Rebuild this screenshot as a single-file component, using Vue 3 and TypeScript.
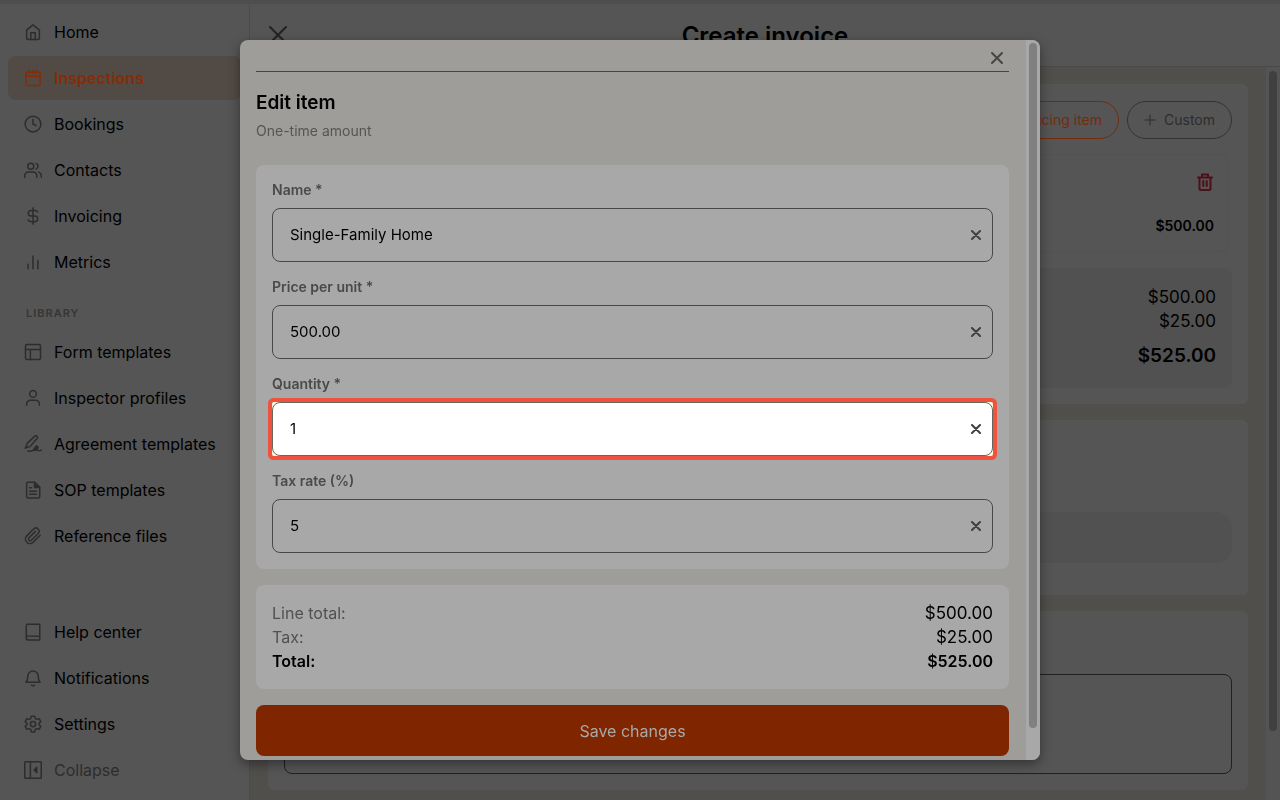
<script setup lang="ts">
import { ref } from 'vue'

interface NavItem {
  label: string
  icon: string
  active?: boolean
}

const icons: Record<string, string> = {
  home: '<path d="M3.5 9.5 12 2.5l8.500 7V20a2 2 0 0 1-2 2h-13a2 2 0 0 1-2-2z"/><path d="M9 22v-9h6v9"/>',
  calendar: '<rect x="2.500" y="4" width="19" height="18" rx="1.500"/><path d="M7.500 1v5M16.500 1v5M12 2v4M2.500 9.500h19"/>',
  clock: '<circle cx="12" cy="12" r="10.500"/><path d="M12 5.500V12l4 2"/>',
  people: '<circle cx="9" cy="7" r="4"/><path d="M1 21.500v-2a5 5 0 0 1 5-5h6a5 5 0 0 1 5 5v2M16 3.200a4 4 0 0 1 0 7.600M19.500 14.800a5 5 0 0 1 3.500 4.700v2"/>',
  dollar: '<path d="M12 1v22M18 6.500C17.500 5 16 4.500 14.500 4.500h-5a3.700 3.700 0 0 0 0 7.500h5a3.700 3.700 0 0 1 0 7.500h-5C7.500 19.500 6 18.500 5.500 17"/>',
  bars: '<path d="M5.500 21v-6M12 21V4M18.500 21V10"/>',
  layout: '<rect x="2" y="2" width="20" height="20" rx="2"/><path d="M2 8.500h20M8.500 8.500V22"/>',
  person: '<circle cx="12" cy="6.500" r="4.500"/><path d="M3.500 21.500v-1.500a5 5 0 0 1 5-5h7a5 5 0 0 1 5 5v1.500"/>',
  sign: '<path d="m2.500 17 1.500-5.500L14 1.800a2.200 2.200 0 0 1 3.300 3L8 15.500zM1.500 17.500l2-3M5 21.500c5 1 8-1 10-4 1.500-3 4-2.500 3 .5-1 2.500-4 3.500-4.500 1.500s4-3 4.500 0c.3 2 3 2 5 .5"/><path d="M14 17.500l3-3 1.500 1.500-3 4z" fill="currentColor"/>',
  file: '<path d="M5.500 1.500H14L21 8v12.500a2 2 0 0 1-2 2H5.500a2 2 0 0 1-2-2v-17a2 2 0 0 1 2-2z"/><path d="M14 2v6.500h6.500z" fill="currentColor"/><path d="M7.500 9h2.500M7.500 13.500h9M7.500 17.500h9"/>',
  clip: '<path d="m21.500 11-9.300 9.300a6 6 0 0 1-8.500-8.500L12.800 2.700a4.200 4.200 0 0 1 6 6l-8.900 8.900a2.200 2.200 0 0 1-3.200-3.200l8.300-8.200"/>',
  book: '<path d="M6 1.500h15v21H5.500a2.500 2.500 0 0 1-2.500-2.500V4a2.500 2.500 0 0 1 3-2.500zM3 19.500a2.500 2.500 0 0 1 2.500-2H21"/>',
  bell: '<path d="M5 9.500a7 7 0 0 1 14 0c0 6 2.500 8 2.500 8h-19S5 15.500 5 9.500zM10 21.500c1 1.300 3 1.300 4 0"/>',
  gear: '<circle cx="12" cy="12" r="3.500"/><path d="M9.800 1.500h4.400l.9 3.200 1.900 1.100 3.200-.9 2.200 3.900-2.300 2.300v1.800l2.300 2.300-2.200 3.900-3.200-.9-1.900 1.100-.9 3.200H9.800l-.9-3.200L7 18.200l-3.200.9-2.200-3.900 2.300-2.300v-1.800L1.600 8.800l2.200-3.900 3.200.9 1.900-1.100z"/>',
  collapse: '<rect x="1" y="1" width="22" height="22" rx="1"/><path d="M8.500 1v22"/><path d="M17 8.500v7L13.500 12z" fill="currentColor"/>',
}

const mainNav: NavItem[] = [
  { label: 'Home', icon: 'home' },
  { label: 'Inspections', icon: 'calendar', active: true },
  { label: 'Bookings', icon: 'clock' },
  { label: 'Contacts', icon: 'people' },
  { label: 'Invoicing', icon: 'dollar' },
  { label: 'Metrics', icon: 'bars' },
]
const libraryNav: NavItem[] = [
  { label: 'Form templates', icon: 'layout' },
  { label: 'Inspector profiles', icon: 'person' },
  { label: 'Agreement templates', icon: 'sign' },
  { label: 'SOP templates', icon: 'file' },
  { label: 'Reference files', icon: 'clip' },
]
const footerNav: NavItem[] = [
  { label: 'Help center', icon: 'book' },
  { label: 'Notifications', icon: 'bell' },
  { label: 'Settings', icon: 'gear' },
]

const fields = ref([
  { id: 'name', label: 'Name *', value: 'Single-Family Home', highlight: false },
  { id: 'price', label: 'Price per unit *', value: '500.00', highlight: false },
  { id: 'quantity', label: 'Quantity *', value: '1', highlight: true },
  { id: 'tax', label: 'Tax rate (%)', value: '5', highlight: false },
])
const notes = ref('')
</script>

<template>
  <div class="app">
    <div class="topstrip"></div>
    <div class="shell">
      <aside class="sidebar">
        <nav class="nav">
          <a v-for="n in mainNav" :key="n.label" href="#" class="item" :class="{ active: n.active }">
            <svg class="icon" viewBox="0 0 24 24" v-html="icons[n.icon]"></svg>{{ n.label }}
          </a>
        </nav>
        <h2 class="section">LIBRARY</h2>
        <nav class="nav">
          <a v-for="n in libraryNav" :key="n.label" href="#" class="item">
            <svg class="icon" viewBox="0 0 24 24" v-html="icons[n.icon]"></svg>{{ n.label }}
          </a>
        </nav>
        <nav class="nav bottom">
          <a v-for="n in footerNav" :key="n.label" href="#" class="item">
            <svg class="icon" viewBox="0 0 24 24" v-html="icons[n.icon]"></svg>{{ n.label }}
          </a>
          <button type="button" class="item muted">
            <svg class="icon" viewBox="0 0 24 24" v-html="icons.collapse"></svg>Collapse
          </button>
        </nav>
      </aside>

      <main class="main">
        <header class="header">
          <button type="button" class="close-page" aria-label="Close invoice">
            <svg viewBox="0 0 18 18"><path d="M1 1l16 16M17 1L1 17" /></svg>
          </button>
          <h1>Create invoice</h1>
        </header>
        <div class="scroller">
          <div class="content">
            <section class="card first">
              <div class="actions">
                <button type="button" class="pill orange">Pricing item</button>
                <button type="button" class="pill">
                  <svg viewBox="0 0 12 12"><path d="M6 1v10M1 6h10" /></svg>Custom
                </button>
              </div>
              <div class="line">
                <button type="button" class="trash" aria-label="Delete item">
                  <svg viewBox="0 0 18 18"><path d="M2 4.500h14M6 4V1.500h6V4M3.500 4.500v11a1.500 1.500 0 0 0 1.500 1.500h8a1.500 1.500 0 0 0 1.500-1.500v-11M7.300 8v5M10.700 8v5" /></svg>
                </button>
                <strong>$500.00</strong>
              </div>
              <div class="sums">
                <span>$500.00</span>
                <span>$25.00</span>
                <strong>$525.00</strong>
              </div>
            </section>
            <section class="card middle"><div class="bar"></div></section>
            <section class="card last">
              <textarea v-model="notes" aria-label="Notes"></textarea>
            </section>
          </div>
          <div class="track"><div class="thumb"></div></div>
        </div>
      </main>
    </div>

    <div class="overlay">
      <div class="modal" role="dialog" aria-labelledby="dialog-title">
        <div class="body">
          <div class="modal-top">
            <button type="button" class="close" aria-label="Close">
              <svg viewBox="0 0 14 14"><path d="M2 2l10 10M12 2L2 12" /></svg>
            </button>
          </div>
          <h2 id="dialog-title" class="title">Edit item</h2>
          <p class="subtitle">One-time amount</p>
          <form class="panel fields" @submit.prevent>
            <div v-for="f in fields" :key="f.id" class="field">
              <label :for="f.id">{{ f.label }}</label>
              <div class="box" :class="{ highlight: f.highlight }">
                <div class="control">
                  <input :id="f.id" v-model="f.value" type="text" />
                  <button type="button" class="clear" :aria-label="'Clear ' + f.label" @click="f.value = ''">
                    <svg viewBox="0 0 10 10"><path d="M1 1l8 8M9 1L1 9" /></svg>
                  </button>
                </div>
              </div>
            </div>
          </form>
          <dl class="panel totals">
            <div><dt>Line total:</dt><dd>$500.00</dd></div>
            <div><dt>Tax:</dt><dd>$25.00</dd></div>
            <div class="total"><dt>Total:</dt><dd>$525.00</dd></div>
          </dl>
          <button type="button" class="save">Save changes</button>
        </div>
        <div class="modal-track"><div class="modal-thumb"></div></div>
      </div>
    </div>
  </div>
</template>

<style>
body {
  margin: 0;
  overflow: hidden;
}
</style>

<style scoped>
* {
  box-sizing: border-box;
}
.app {
  height: 100vh;
  display: flex;
  flex-direction: column;
  overflow: hidden;
  background: #555;
  color: #000;
  font-family: Inter, 'Liberation Sans', sans-serif;
  font-size: 16px;
  line-height: 24px;
}
button,
input,
textarea {
  font: inherit;
  color: inherit;
  background: none;
  border: 0;
  padding: 0;
  margin: 0;
}
h1,
h2,
p,
dl,
dd {
  margin: 0;
}
svg {
  display: block;
  fill: none;
  stroke: currentColor;
  stroke-linecap: round;
  stroke-linejoin: round;
}
.topstrip {
  height: 4px;
  flex: none;
  background: #4e4e4e;
}
.shell {
  flex: 1;
  min-height: 0;
  display: flex;
}
.sidebar {
  width: 250px;
  flex: none;
  display: flex;
  flex-direction: column;
  padding: 6px 8px 8px;
  border-right: 1px solid #4c4c4c;
}
.nav {
  display: flex;
  flex-direction: column;
  gap: 2px;
}
.bottom {
  margin-top: auto;
}
.item {
  display: flex;
  align-items: center;
  gap: 12px;
  height: 44px;
  padding: 0 16px;
  border-radius: 8px;
  color: #000;
  text-decoration: none;
  white-space: nowrap;
}
.icon {
  width: 18px;
  height: 18px;
  flex: none;
  color: #2d2d2d;
  stroke-width: 2;
}
.item.active {
  background: #524a45;
  color: #872c06;
  font-weight: 600;
}
.item.active .icon {
  color: #872c06;
}
.item.muted {
  color: #2d2d2d;
}
.section {
  height: 46px;
  padding: 17px 18px 0;
  font-size: 11px;
  line-height: 24px;
  font-weight: 600;
  letter-spacing: 1px;
  color: #363636;
}
.main {
  flex: 1;
  min-width: 0;
  display: flex;
  flex-direction: column;
}
.header {
  height: 63px;
  flex: none;
  display: grid;
  grid-template-columns: 56px 1fr 56px;
  align-items: center;
  border-bottom: 1px solid #494949;
}
.header h1 {
  padding-top: 2px;
  font-size: 24px;
  line-height: 32px;
  font-weight: 600;
  text-align: center;
}
.close-page {
  justify-self: center;
}
.close-page svg {
  width: 18px;
  height: 18px;
  stroke: #222;
  stroke-width: 2;
}
.scroller {
  flex: 1;
  min-height: 0;
  display: flex;
}
.content {
  flex: 1;
  min-width: 0;
  display: flex;
  flex-direction: column;
  gap: 16px;
  padding: 17px 18px 10px;
  background: #514f4c;
}
.card {
  padding: 16px;
  border-radius: 6px;
  background: #555;
}
.first {
  padding-top: 17px;
}
.actions {
  display: flex;
  justify-content: flex-end;
  gap: 8px;
  margin-bottom: 15px;
}
.pill {
  display: flex;
  align-items: center;
  gap: 8px;
  height: 38px;
  padding: 0 16px;
  border: 1px solid #333;
  border-radius: 19px;
  font-size: 14px;
  color: #2d2d2d;
}
.pill svg {
  width: 12px;
  height: 12px;
}
.pill.orange {
  border-color: #742b0c;
  color: #742b0c;
}
.line {
  height: 98px;
  display: flex;
  flex-direction: column;
  align-items: flex-end;
  gap: 23px;
  padding: 18px 14px 8px;
  margin-right: 3px;
  border: 1px solid #525252;
  border-radius: 8px;
  font-size: 14px;
}
.line strong {
  font-weight: 600;
}
.trash svg {
  width: 18px;
  height: 18px;
  stroke: #4e1018;
  stroke-width: 2;
}
.sums {
  display: flex;
  flex-direction: column;
  align-items: flex-end;
  margin-top: 16px;
  padding: 17px 16px;
  border-radius: 8px;
  background: #515151;
  font-size: 17px;
}
.sums strong {
  margin-top: 8px;
  font-size: 19px;
  line-height: 30px;
  font-weight: 600;
}
.middle {
  height: 175px;
  flex: none;
  padding-top: 92px;
}
.bar {
  height: 51px;
  border-radius: 16px;
  background: #515151;
}
.last {
  flex: 1;
  display: flex;
  align-items: flex-end;
}
.last textarea {
  display: block;
  width: 100%;
  height: 100px;
  border: 1px solid #202020;
  border-radius: 8px;
  resize: none;
}
.track {
  width: 14px;
  flex: none;
  padding: 4px 3px;
  background: #545454;
}
.thumb {
  height: 91%;
  border-radius: 4px;
  background: #404040;
}
.overlay {
  position: fixed;
  inset: 0;
  display: flex;
  align-items: center;
  justify-content: center;
  padding: 40px;
}
.modal {
  width: 100%;
  max-width: 800px;
  height: 100%;
  display: flex;
  overflow: hidden;
  border-radius: 8px;
  background: #9f9d9a;
  box-shadow: 0 4px 12px rgba(0, 0, 0, 0.4);
}
.body {
  flex: 1;
  min-width: 0;
  display: flex;
  flex-direction: column;
  padding: 0 17px 4px 16px;
}
.modal-top {
  height: 32px;
  flex: none;
  display: flex;
  justify-content: flex-end;
  align-items: center;
  padding: 4px 5px 0;
  border-bottom: 1px solid #444;
}
.close svg {
  width: 14px;
  height: 14px;
  stroke: #454545;
  stroke-width: 2;
}
.title {
  margin-top: 17px;
  font-size: 19px;
  line-height: 28px;
  font-weight: 600;
}
.subtitle {
  margin: 3px 0 23px;
  font-size: 14px;
  line-height: 22px;
  color: #555;
}
.panel {
  border-radius: 8px;
  background: #a8a8a8;
}
.fields {
  display: flex;
  flex-direction: column;
  gap: 15px;
  padding: 15px 16px 16px;
}
.field label {
  display: block;
  height: 28px;
  font-size: 14px;
  line-height: 19px;
  font-weight: 600;
  color: #4a4a4a;
}
.control {
  height: 54px;
  display: flex;
  align-items: center;
  border: 1px solid #484848;
  border-radius: 8px;
  padding: 0 11px 0 17px;
}
.control input {
  flex: 1;
  min-width: 0;
  height: 24px;
  outline: 0;
  font-size: 15px;
}
.clear svg {
  width: 10px;
  height: 10px;
  stroke: #404040;
  stroke-width: 2;
}
.highlight {
  border-radius: 2px;
  background: #fffbd8;
  box-shadow: 0 0 0 4px #ef5340;
}
.highlight .control {
  background: #fff;
  border-color: #66665a;
}
.totals {
  margin: 16px 0;
  padding: 16px;
}
.totals div {
  display: flex;
  justify-content: space-between;
}
.totals dt {
  color: #505050;
}
.totals dd {
  font-size: 17px;
}
.totals .total dt,
.totals .total dd {
  color: #000;
  font-size: 16px;
  font-weight: 600;
}
.save {
  height: 51px;
  flex: none;
  border-radius: 8px;
  background: #7f2600;
  color: #a8a8a8;
}
.modal-track {
  width: 14px;
  flex: none;
  padding: 3px;
  background: #a8a8a8;
}
.modal-thumb {
  height: 96%;
  border-radius: 4px;
  background: #808080;
}
</style>
